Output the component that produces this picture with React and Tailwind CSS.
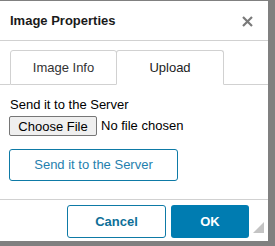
export default function App() {
  return (
    <div className="w-[275px] h-[246px] bg-[#808080] pt-px font-['Liberation_Sans',Arial,sans-serif] text-[13px]">
      {/* Dialog */}
      <div className="relative w-[268px] h-[240px] bg-white flex flex-col">
        {/* Header */}
        <div className="h-[40px] border-b border-[#d1d1d1] flex items-center justify-between pl-[10px] pr-[15px]">
          <span className="font-bold text-[#1a1a1a] text-[13px]">Image Properties</span>
          <svg width="11" height="11" viewBox="0 0 11 11" className="mt-px">
            <path d="M1 1 L10 10 M10 1 L1 10" stroke="#7a7a7a" strokeWidth="2.2" />
          </svg>
        </div>

        {/* Body */}
        <div className="h-[158px] pt-[9px]">
          <div className="flex items-end h-[35px]">
            <div className="w-[10px] h-full border-b border-[#d1d1d1]" />
            <div className="w-[107px] h-full border border-[#d1d1d1] rounded-t-[3px] flex items-center justify-center text-[#333]">
              Image Info
            </div>
            <div className="w-[108px] -ml-px h-full border border-[#d1d1d1] border-b-white rounded-t-[3px] flex items-center justify-center text-[#222]">
              Upload
            </div>
            <div className="flex-1 h-full border-b border-[#d1d1d1]" />
          </div>

          <div className="pl-[10px] pt-[12px]">
            <div className="leading-[15px] text-black">Send it to the Server</div>
            <div className="flex items-center mt-[4px] -ml-px">
              <button className="w-[88px] h-[20px] border border-[#767676] bg-[#efefef] rounded-[2px] text-black leading-none">
                Choose File
              </button>
              <span className="ml-[4px] text-black">No file chosen</span>
            </div>
            <button className="mt-[13px] -ml-px w-[169px] h-[32px] border border-[#0e7aa6] rounded-[3px] text-[#1f7fae] bg-white">
              Send it to the Server
            </button>
          </div>
        </div>

        {/* Footer */}
        <div className="h-[42px] border-t border-[#d1d1d1] flex justify-end items-start pt-[5px] pr-[19px] gap-[5px]">
          <button className="w-[99px] h-[33px] border border-[#0e7aa6] rounded-[3px] text-[#0e6f98] font-bold bg-white">
            Cancel
          </button>
          <button className="w-[78px] h-[33px] rounded-[3px] bg-[#007cb1] text-white font-bold">
            OK
          </button>
        </div>

        {/* Resize grip */}
        <svg width="11" height="11" viewBox="0 0 11 11" className="absolute right-[4px] bottom-[8px]">
          <path d="M11 0 L11 11 L0 11 Z" fill="#c4c4c4" />
        </svg>
      </div>
    </div>
  );
}
